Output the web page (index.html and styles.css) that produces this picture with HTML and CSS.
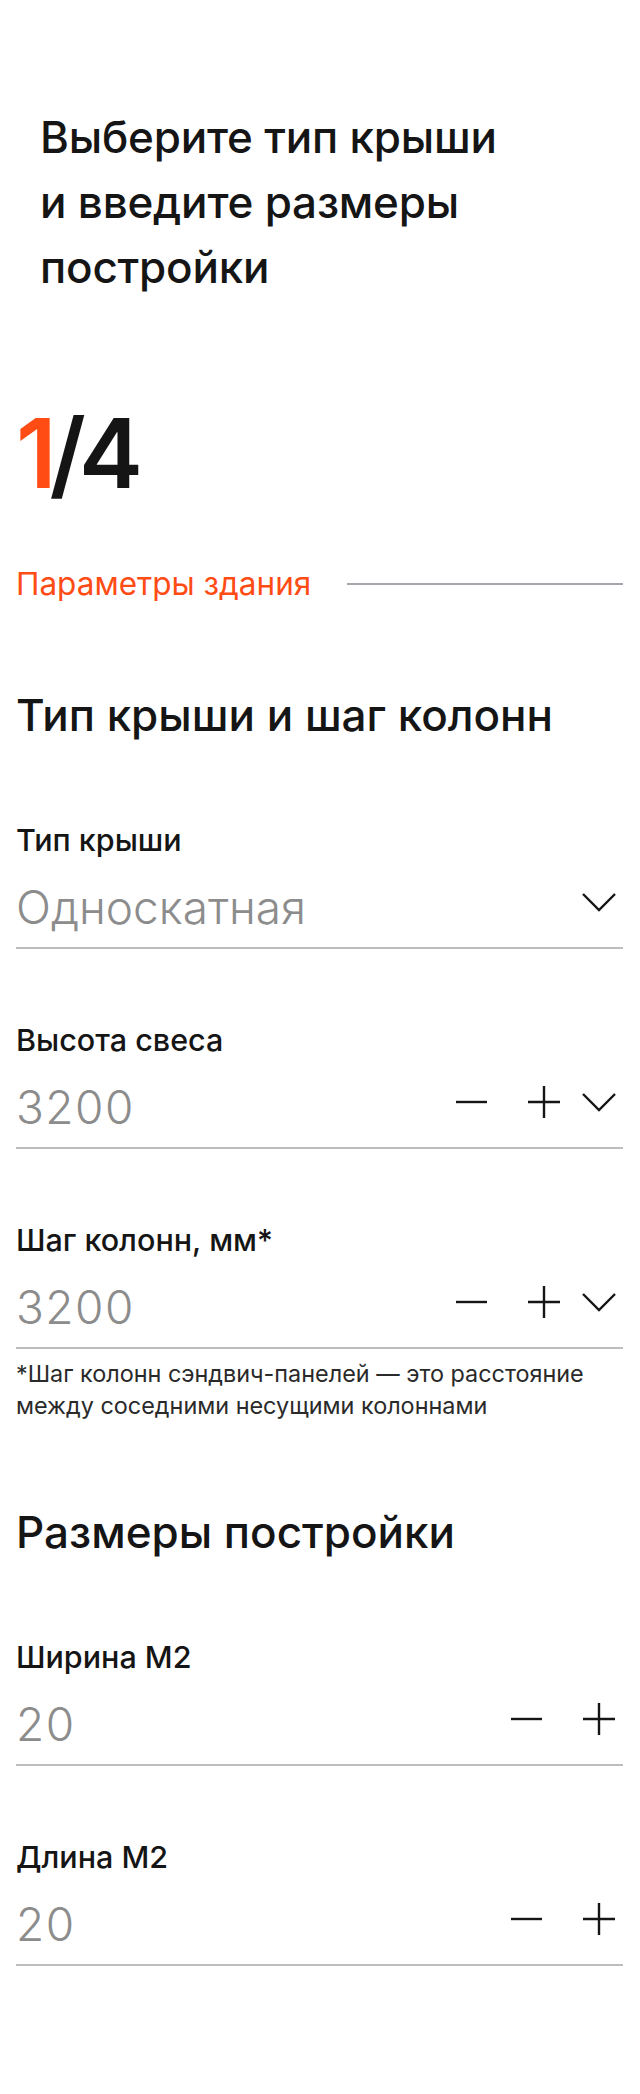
FILE: index.html
```html
<!DOCTYPE html>
<html lang="ru">
<head>
  <meta charset="UTF-8">
  <meta name="viewport" content="width=device-width, initial-scale=1.0">
  <title>Калькулятор</title>
  <link rel="stylesheet" href="styles.css">
</head>
<body>

  <main class="calc">
    <h1 class="calc-title">Выберите тип крыши<br>и введите размеры<br>постройки</h1>

    <div class="step"><span class="step-current">1</span>/4</div>

    <div class="stage">
      <span class="stage-name">Параметры здания</span>
      <span class="stage-line"></span>
    </div>

    <section class="group">
      <h2 class="group-title">Тип крыши и шаг колонн</h2>

      <div class="field">
        <div class="field-label">Тип крыши</div>
        <div class="field-row">
          <span class="field-value">Односкатная</span>
          <div class="field-controls">
            <button class="icon-btn"><svg viewBox="0 0 34 34"><path d="M1 9 L17 25 L33 9"/></svg></button>
          </div>
        </div>
      </div>

      <div class="field">
        <div class="field-label">Высота свеса</div>
        <div class="field-row">
          <span class="field-value num">3200</span>
          <div class="field-controls">
            <button class="icon-btn minus"><svg viewBox="0 0 34 34"><path d="M1 17 H32"/></svg></button>
            <button class="icon-btn"><svg viewBox="0 0 34 34"><path d="M1 17 H33 M17 1 V33"/></svg></button>
            <button class="icon-btn"><svg viewBox="0 0 34 34"><path d="M1 9 L17 25 L33 9"/></svg></button>
          </div>
        </div>
      </div>

      <div class="field">
        <div class="field-label">Шаг колонн, мм*</div>
        <div class="field-row">
          <span class="field-value num">3200</span>
          <div class="field-controls">
            <button class="icon-btn minus"><svg viewBox="0 0 34 34"><path d="M1 17 H32"/></svg></button>
            <button class="icon-btn"><svg viewBox="0 0 34 34"><path d="M1 17 H33 M17 1 V33"/></svg></button>
            <button class="icon-btn"><svg viewBox="0 0 34 34"><path d="M1 9 L17 25 L33 9"/></svg></button>
          </div>
        </div>
        <p class="field-note">*Шаг колонн сэндвич-панелей — это расстояние<br>между соседними несущими колоннами</p>
      </div>
    </section>

    <section class="group">
      <h2 class="group-title">Размеры постройки</h2>

      <div class="field">
        <div class="field-label">Ширина М2</div>
        <div class="field-row">
          <span class="field-value num">20</span>
          <div class="field-controls">
            <button class="icon-btn minus"><svg viewBox="0 0 34 34"><path d="M1 17 H32"/></svg></button>
            <button class="icon-btn"><svg viewBox="0 0 34 34"><path d="M1 17 H33 M17 1 V33"/></svg></button>
          </div>
        </div>
      </div>

      <div class="field">
        <div class="field-label">Длина М2</div>
        <div class="field-row">
          <span class="field-value num">20</span>
          <div class="field-controls">
            <button class="icon-btn minus"><svg viewBox="0 0 34 34"><path d="M1 17 H32"/></svg></button>
            <button class="icon-btn"><svg viewBox="0 0 34 34"><path d="M1 17 H33 M17 1 V33"/></svg></button>
          </div>
        </div>
      </div>
    </section>
  </main>

</body>
</html>
```

FILE: styles.css
```css
* {
  box-sizing: border-box;
}
body {
  margin: 0;
  background-color: #ffffff;
  color: #151515;
  font-family: Inter, "Liberation Sans", Arial, sans-serif;
}
.calc {
  padding: 0 17px 120px 16px;
}
.calc-title {
  margin: 105px 0 0 24px;
  font-size: 44px;
  font-weight: 500;
  line-height: 65px;
  letter-spacing: -0.2px;
}
.step {
  margin-top: 105px;
  font-size: 96px;
  font-weight: 600;
  line-height: 96px;
  letter-spacing: -7px;
}
.step-current {
  color: #ff4b14;
}
.stage {
  display: flex;
  align-items: center;
  gap: 36px;
  margin-top: 65px;
}
.stage-name {
  color: #ff4b14;
  font-size: 31.5px;
  line-height: 36px;
}
.stage-line {
  flex: 1;
  height: 2px;
  background-color: #a3a6ad;
}
.group {
  margin-top: 89px;
}
.group + .group {
  margin-top: 86px;
}
.group-title {
  margin: 0;
  font-size: 44px;
  font-weight: 500;
  line-height: 48px;
}
.field {
  margin-top: 74px;
}
.group-title + .field {
  margin-top: 84px;
}
.field-label {
  margin-bottom: 11px;
  font-size: 30.5px;
  font-weight: 500;
  line-height: 34px;
}
.field-row {
  display: flex;
  align-items: center;
  justify-content: space-between;
  padding: 16px 7px 17px 0;
  border-bottom: 2px solid #bdbdbd;
}
.field-value {
  color: #8c8c8c;
  font-size: 46px;
  font-weight: 300;
  line-height: 46px;
}
.field-value.num {
  letter-spacing: 1.5px;
}
.field-controls {
  display: flex;
  align-items: center;
  gap: 21px;
  margin-top: -10px;
}
.icon-btn {
  width: 34px;
  height: 34px;
  padding: 0;
  border: none;
  background: none;
  cursor: pointer;
}
.icon-btn.minus {
  margin-right: 17px;
}
.icon-btn svg {
  display: block;
  width: 100%;
  height: 100%;
  fill: none;
  stroke: #151515;
  stroke-width: 2.4;
}
.field-note {
  margin: 9px 0 0;
  color: #2a2a2a;
  font-size: 23.4px;
  line-height: 32px;
}
```
